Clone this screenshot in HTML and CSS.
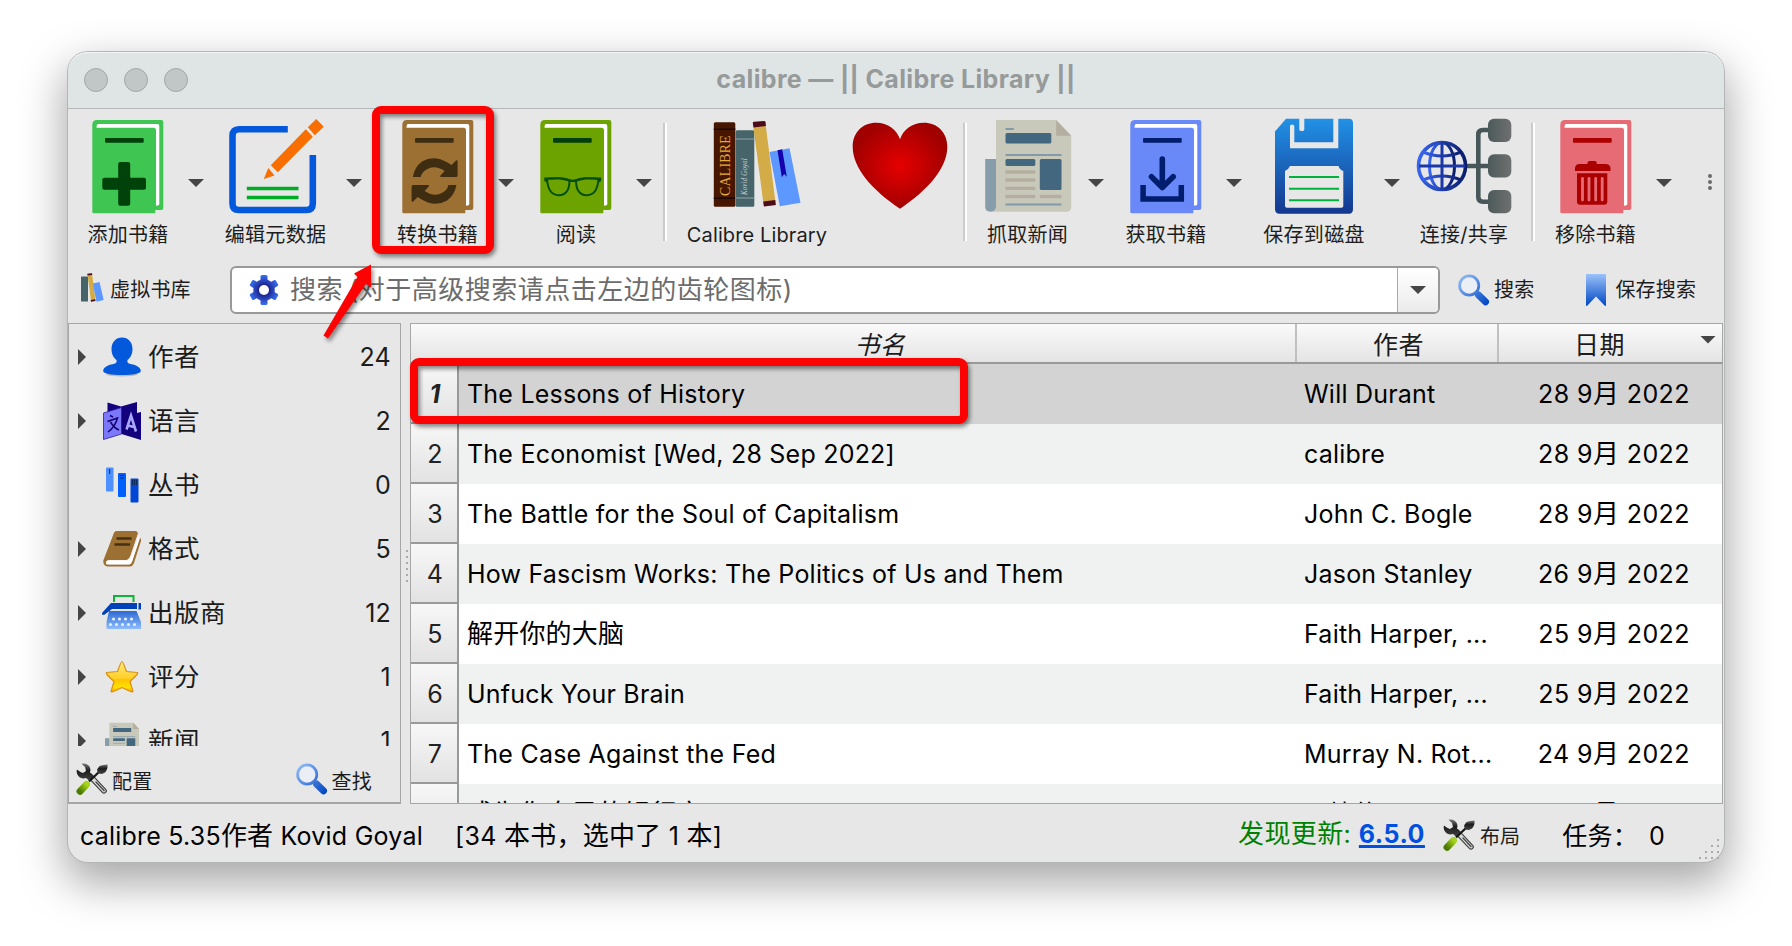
FILE: index.html
```html
<!DOCTYPE html>
<html lang="zh-CN">
<head>
<meta charset="utf-8">
<title>calibre — || Calibre Library ||</title>
<link rel="stylesheet" href="styles.css">
</head>
<body>
<svg class="defs" width="0" height="0" aria-hidden="true">
  <defs>
    <linearGradient id="gFloppy" x1="0" y1="0" x2="0" y2="1"><stop offset="0" stop-color="#2191e6"/><stop offset="1" stop-color="#14378e"/></linearGradient>
    <radialGradient id="gHeart" cx=".5" cy=".5" r=".52"><stop offset="0" stop-color="#e60000"/><stop offset="1" stop-color="#a00000"/></radialGradient>
    <linearGradient id="gGlobe" x1="0" y1="0" x2="1" y2="0"><stop offset="0" stop-color="#3765f0"/><stop offset="1" stop-color="#0a1c6c"/></linearGradient>
    <linearGradient id="gNode" x1="0" y1="0" x2="1" y2="0"><stop offset="0" stop-color="#4c5a5a"/><stop offset="1" stop-color="#707070"/></linearGradient>
    <linearGradient id="gMark" x1="0" y1="0" x2="0" y2="1"><stop offset="0" stop-color="#9cc2fa"/><stop offset="1" stop-color="#0048c4"/></linearGradient>
    <linearGradient id="gLens" gradientUnits="userSpaceOnUse" x1="2" y1="2" x2="30" y2="30"><stop offset="0" stop-color="#93bdf9"/><stop offset="1" stop-color="#0046c2"/></linearGradient>
    <radialGradient id="gGear" gradientUnits="userSpaceOnUse" cx="0" cy="0" r="15"><stop offset=".3" stop-color="#1c1f8c"/><stop offset="1" stop-color="#3a70f0"/></radialGradient>
    <linearGradient id="gStar" x1="0" y1="0" x2="0" y2="1"><stop offset="0" stop-color="#ffe97a"/><stop offset=".55" stop-color="#ffd02a"/><stop offset=".6" stop-color="#ffc400"/><stop offset=".85" stop-color="#ffe000"/><stop offset="1" stop-color="#f7a400"/></linearGradient>
    <linearGradient id="gType" x1="0" y1="0" x2="0" y2="1"><stop offset="0" stop-color="#2d6ad6"/><stop offset="1" stop-color="#8fbcfb"/></linearGradient>
    <linearGradient id="gHandle" x1="1" y1="0" x2="0" y2="1"><stop offset="0" stop-color="#a5d51c"/><stop offset="1" stop-color="#4d7a00"/></linearGradient>
    <linearGradient id="gSteel" x1="0" y1="0" x2="0" y2="1"><stop offset="0" stop-color="#777"/><stop offset=".4" stop-color="#1c1c1c"/><stop offset="1" stop-color="#444"/></linearGradient>

    <symbol id="book" viewBox="0 0 96 96">
      <path fill="currentColor" d="M17 2H81.3Q83.3 2 83.3 4V90Q83.3 92 81.3 92H75.3V95.3H13.8Q12.3 95.3 12.3 94V7Q12.3 2 17 2Z"/>
      <path fill="#fff" d="M18 6H77.5Q79.3 6 79.3 8V86Q79.3 87.7 76 87.7V12Q76 10 74 9.8H16.5Q16.5 6.3 18 6Z"/>
    </symbol>
    <symbol id="news" viewBox="0 0 96 96">
      <path fill="#879da9" d="M5.2 41H17V88Q17 93.7 10.7 93.7T5.2 88Z"/>
      <path fill="#c8c8bb" d="M16 2H76.2L91.2 17.7V89Q91.2 93.7 86.5 93.7H12Q16 92 16 88Z"/>
      <path fill="#b3ae9f" d="M76.2 2V17.7H91.2Z"/>
      <g fill="#42677f"><rect x="25.5" y="15" width="45.8" height="10.5" rx="1.5"/><rect x="25.5" y="41" width="29.8" height="7" rx="1.5"/><rect x="59.8" y="41" width="21.7" height="31" rx="1.5"/></g>
      <path stroke="#8199a8" stroke-width="1.8" d="M25.5 11h8.3M25.5 37h56M25.5 86.5h56"/>
      <path stroke="#b3ae9f" stroke-width="3.4" d="M25.5 54h29.8M25.5 62h29.8M25.5 70.4h29.8M25.5 78.5h29.8M59.8 78.5h21.7"/>
    </symbol>
    <symbol id="lens" viewBox="0 0 32 32">
      <circle cx="11.2" cy="11.5" r="9.6" fill="#ebeef5" stroke="url(#gLens)" stroke-width="2.7"/>
      <path d="M18 18.5L20.5 21" stroke="#4c86e0" stroke-width="3"/>
      <path d="M20.5 21L27.5 27.8" stroke="url(#gLens)" stroke-width="7" stroke-linecap="round"/>
    </symbol>
    <symbol id="tools" viewBox="0 0 32 32">
      <path d="M14 13L28 27.800" stroke="#3a3a3a" stroke-width="5.600" stroke-linecap="round"/>
      <path d="M15 14L28 27.800" stroke="#d8d8d8" stroke-width="3.400" stroke-linecap="round"/>
      <path d="M20 19L28 27.500" stroke="#444" stroke-width="1.300" stroke-linecap="round"/>
      <path fill="url(#gSteel)" d="M5.500 .8L9 4 10 8 7 10 4.500 9 .8 6.500Q0 12 4 14.500 7 16 10 15L13.500 18 17.500 13 14 9.500Q15.500 5 12 2 9 0 5.500 .8Z"/>
      <path d="M13 18.500L24 8" stroke="#161616" stroke-width="2.200"/>
      <path fill="url(#gSteel)" d="M31.500 1.500Q32 6 29 9.500L26 11 22 10.500 21 6.500 23.500 3Q27 1.500 31.500 1.500Z"/>
      <path d="M10.500 21.500L4 28.300" stroke="url(#gHandle)" stroke-width="7" stroke-linecap="round"/>
    </symbol>
  </defs>
</svg>

<main class="window">
  <header class="titlebar">
    <div class="lights"><i></i><i></i><i></i></div>
    <h1>calibre — || Calibre Library ||</h1>
  </header>

  <nav class="toolbar">
    <div class="tool w120"><svg class="ico green" viewBox="0 0 96 96"><use href="#book"/><g fill="#00420a"><rect x="25" y="20" width="38.7" height="4.8" rx="1"/><rect x="22.3" y="59.8" width="43.7" height="12" rx="2"/><rect x="38.2" y="44" width="12" height="43.7" rx="2"/></g></svg><span>添加书籍</span></div>
    <b class="drop"></b>
    <div class="tool w142"><svg class="ico" viewBox="0 0 96 96"><path fill="none" stroke="#0458dc" stroke-width="6.6" d="M59.8 11.3H11Q4.5 11.3 4.5 17.8V85.5Q4.5 92 11 92H78.3Q84.8 92 84.8 85.5V37"/><path fill="#f86e00" d="M35.8 61L40.3 50 46.5 57.5ZM42.8 47.3L77.8 11.3 84.8 18.7 49.8 54.3ZM79.8 9.3L88.2 1 95.8 8.7 86.8 17.3Z"/><path stroke="#00ac24" stroke-width="3.4" d="M18.8 70.5H70.5M18.8 79.5H70.5"/></svg><span>编辑元数据</span></div>
    <b class="drop"></b>
    <div class="tool w121 g15"><svg class="ico brown" viewBox="0 0 96 96"><use href="#book"/><g fill="#3f2d12"><rect x="25" y="20" width="38.7" height="4.8" rx="1"/><path d="M22.8 59Q24.5 49 32 43.5 44 36.5 57.5 44.5L61.5 47 66 42.5Q67.6 41.7 67.6 43.5V57.5Q67.6 59 66 59H51Q49.3 58.5 50.5 57.5L54.6 53Q45 46.5 36.5 51.5 31.5 54.5 30.8 59Z"/><path transform="rotate(180 44.6 63)" d="M22.8 59Q24.5 49 32 43.5 44 36.5 57.5 44.5L61.5 47 66 42.5Q67.6 41.7 67.6 43.5V57.5Q67.6 59 66 59H51Q49.3 58.5 50.5 57.5L54.6 53Q45 46.5 36.5 51.5 31.5 54.5 30.8 59Z"/></g></svg><span>转换书籍</span></div>
    <b class="drop"></b>
    <div class="tool w120 g2"><svg class="ico olive" viewBox="0 0 96 96"><use href="#book"/><rect x="25" y="20" width="38.7" height="4.8" rx="1" fill="#013f0a"/><path fill="none" stroke="#06500f" stroke-width="2" d="M19 61.5Q20 60.3 30 60.3 40.5 60.5 41.5 63.5 41 77 31 77.2 20.500 77.500 19 61.500ZM70.500 61.500Q69.500 60.300 59.500 60.300 49 60.500 48 63.500 48.500 77 58.500 77.200 69 77.500 70.500 61.500Z"/><path fill="#06500f" d="M16.300 59.500Q23 58.800 33 59.500L41.500 61Q45 62.500 48 61L56.500 59.500Q66 58.800 73.200 59.500V63L71 64.500 69 61.500 58 61.300 48.500 63.500Q45 64.500 41.500 63.500L31 61.300 20.500 61.500 19 64.500 16.300 63Z"/></svg><span>阅读</span></div>
    <b class="drop"></b>
    <i class="rule g11"></i>
    <div class="tool w140 g20"><svg class="ico" viewBox="0 0 96 96"><rect x="4.800" y="4.300" width="21.500" height="84.400" rx="1.500" fill="#461600"/><path stroke="#1c0800" stroke-width="1.600" d="M4.800 11.300H26.300M4.800 80.300H26.300"/><rect x="26.500" y="12.300" width="18.800" height="76.400" rx="1.500" fill="#466469"/><path stroke="#8fa5a8" d="M26.500 21H45.300M26.500 80H45.300"/><text class="spine-a" transform="translate(20.500 78) rotate(-90)" textLength="61" lengthAdjust="spacingAndGlyphs">CALIBRE</text><text class="spine-b" transform="translate(37.500 77) rotate(-90)" textLength="37" lengthAdjust="spacingAndGlyphs">Kovid Goyal</text><path fill="#d3ac47" d="M43.800 4.700L56.200 3 66.800 87 54.800 88.300Z"/><path fill="#4c0c1c" d="M43.800 4.700Q44 4 45 3.800L55.500 3 56.500 4 56.900 8 44.500 9.500ZM54.200 83.500L66.200 82 66.800 87 55 88.500Z"/><path fill="#5c98ff" d="M60.500 34L80.500 30.300 91.500 84.700 70.800 88.300Z"/><path fill="#1400ac" d="M68.500 32.300L73.200 31.300 77.800 58.700 75.200 56 72.800 59.300Z"/></svg><span class="lat">Calibre Library</span></div>
    <div class="tool w96 g25"><svg class="ico" viewBox="0 0 96 96"><path fill="url(#gHeart)" d="M48 90.700C20 72 .7 50 .7 28.700 .7 14 11 4.700 24 4.700 36 4.700 45 12 48 21.300 51 12 60 4.700 72 4.700 85 4.700 95.300 14 95.300 28.700 95.300 50 76 72 48 90.700Z"/></svg></div>
    <i class="rule g15"></i>
    <div class="tool w121"><svg class="ico"><use href="#news"/></svg><span>抓取新闻</span></div>
    <b class="drop"></b>
    <div class="tool w120 g2"><svg class="ico blue" viewBox="0 0 96 96"><use href="#book"/><rect x="25" y="20" width="38.700" height="4.800" rx="1" fill="#001d6e"/><path fill="none" stroke="#001d6e" stroke-width="5.500" d="M25.100 67V81H63.300V67"/><path fill="none" stroke="#001d6e" stroke-width="5.600" stroke-linecap="round" stroke-linejoin="round" d="M44.300 41V69M33.500 58.700L44.300 69.500 55.200 58.700"/></svg><span>获取书籍</span></div>
    <b class="drop"></b>
    <div class="tool w140 g2"><svg class="ico" viewBox="0 0 96 96"><path fill="url(#gFloppy)" d="M20 .7H83Q87 .7 87 5V91Q87 95.700 83 95.700H13.500Q9 95.700 9 91V13.500Z"/><path fill="#e7e7e7" d="M24 8Q24 6.500 26 6.500T28.300 8V24.300H67.300V0H72.300V30.300H24ZM33.300 0H38.300V11.500Q38.300 13 35.800 13T33.300 11.500ZM24 48H72.500Q73.500 51.500 77.300 53V88Q77.300 89.700 75.500 89.700H21Q19 89.700 19 88V53Q22.500 51.500 24 48Z"/><path stroke="#00b33c" stroke-width="1.900" d="M23 59H73M23 70.700H73M23 82.300H73"/></svg><span>保存到磁盘</span></div>
    <b class="drop"></b>
    <div class="tool w120 g4"><svg class="ico" viewBox="0 0 96 96"><path fill="none" stroke="#475658" stroke-width="4.600" d="M50 48H73M74 12H67Q62.300 12 62.300 16.500V79Q62.300 83.700 67 83.700H74"/><g fill="none" stroke="url(#gGlobe)" stroke-width="3"><circle cx="26" cy="48" r="23.500" stroke-width="3.600"/><ellipse cx="26" cy="48" rx="12.500" ry="23.500"/><path d="M7 34Q26 42 45 34M7 62Q26 54 45 62"/></g><path stroke="#1c38a8" stroke-width="3" d="M26 24V72M3 48H49"/><g fill="url(#gNode)"><rect x="72" y=".7" width="23.300" height="23.300" rx="6"/><rect x="72" y="36.300" width="23.300" height="23.300" rx="6"/><rect x="72" y="72" width="23.300" height="23.300" rx="6"/></g></svg><span>连接/共享</span></div>
    <i class="rule g7"></i>
    <div class="tool w121"><svg class="ico rose" viewBox="0 0 96 96"><use href="#book"/><g fill="#aa0000"><rect x="25" y="20" width="38.700" height="4.800" rx="1"/><path d="M27 53V50Q27.500 46 31.500 46H39.500V44.500Q40 43 41.500 43H47Q48.700 43 48.700 44.500V46H57.500Q62 46 62.500 50V53ZM29 55.300H59.300V83.500Q59.300 86.700 56 86.700H32Q29 86.700 29 83.500Z"/></g><path stroke="#e66b74" stroke-width="2.800" stroke-linecap="round" d="M34.500 60.500V82M41 60.500V82M47.700 60.500V82M54.200 60.500V82"/></svg><span>移除书籍</span></div>
    <b class="drop"></b>
    <div class="more"><i></i><i></i><i></i></div>
  </nav>

  <section class="searchrow">
    <div class="btn vl"><svg width="24" height="30" viewBox="0 0 24 30"><rect x="0" y="3.500" width="7" height="25" rx=".6" fill="#466469"/><path fill="#d3ac47" d="M6.500 1L11 .3 14.500 27.500 10 28.500Z"/><path fill="#4c0c1c" d="M6.300 .8L11 .2 11.200 2 6.500 2.600ZM9.700 27L14.200 26.300 14.500 28 10 28.700Z"/><path fill="#5c98ff" d="M11.800 10.500L18.500 9 22.700 27 15.500 28.700Z"/></svg><span>虚拟书库</span></div>
    <div class="search">
      <svg width="30" height="32" viewBox="-15 -16 30 32"><g fill="url(#gGear)"><circle r="10.800"/><rect x="-3.500" y="-15" width="7" height="30" rx="1.600"/><rect x="-3.500" y="-15" width="7" height="30" rx="1.600" transform="rotate(60)"/><rect x="-3.500" y="-15" width="7" height="30" rx="1.600" transform="rotate(120)"/></g><circle r="5" fill="#fff"/></svg>
      <span class="ph">搜索 (对于高级搜索请点击左边的齿轮图标)</span>
      <div class="combo"><b class="drop"></b></div>
    </div>
    <div class="btn find"><svg width="32" height="32"><use href="#lens"/></svg><span>搜索</span></div>
    <div class="btn save"><svg width="20" height="32" viewBox="0 0 20 32"><path fill="url(#gMark)" d="M0 1Q0 0 1 0H19Q20 0 20 1V32L18.500 31.500 10 22.500 1.500 31.500 0 32Z"/></svg><span>保存搜索</span></div>
  </section>

  <section class="body">
    <aside class="side">
      <ul class="tree">
        <li><b class="tw"></b><svg viewBox="0 0 38 40"><ellipse cx="19" cy="37" rx="16" ry="2.500" fill="#bbb"/><path fill="#0458dc" d="M19 .5C25 .5 29.500 5 29.500 12 29.500 18 27 21 24.500 23 24 26 25 26.500 30 27.500 35 29 37.800 31 37.800 34 37.800 36.500 30 38 19 38S.2 36.500 .2 34C.2 31 3 29 8 27.500 13 26.500 14 26 13.500 23 11 21 8.500 18 8.500 12 8.500 5 13 .5 19 .5Z"/></svg><span>作者</span><em>24</em></li>
        <li><b class="tw"></b><svg viewBox="0 0 38 40"><path fill="#12007c" d="M4.500 1.500L18 5.500 34 1V12L38 11V39L18.500 33 4.500 20Z"/><path fill="#7b78fa" stroke="#2a1c9c" stroke-width=".8" d="M.5 12L18.500 6.500V33L.5 38.500Z"/><path fill="none" stroke="#15006e" stroke-width="1.500" d="M7 14.500L10 16M4.500 20.500L14.500 17Q12 26 5 31M7.500 21Q11 27 16 29"/><path fill="none" stroke="#aaa7ff" stroke-width="2.600" d="M23.500 28.500L28 14.500 33 30.500M25 24.500L31 26"/></svg><span>语言</span><em>2</em></li>
        <li><b class="tw none"></b><svg viewBox="0 0 38 40"><rect x="3" y="2.500" width="7.500" height="24" rx="1" fill="#4d90ff"/><rect x="15" y="8" width="8" height="24" rx="1" fill="#0060ff"/><rect x="27.500" y="13.500" width="8" height="24" rx="1" fill="#0047d6"/><path stroke="#0a2a5c" d="M6.700 4V9M17 10.500h4M17 13h4M29.500 15V20M31.500 15V20M33.500 15V20"/></svg><span>丛书</span><em>0</em></li>
        <li><b class="tw"></b><svg viewBox="0 0 38 40"><path fill="#9c7033" d="M11 4Q12 2 14 2H32Q35 2.500 34.500 5L27 27Q25.500 31 22 31H5Q2.500 32.500 2.800 34.500 3.500 35.800 5 35.800H26Q28 35.800 29 33L37 9Q38.500 9.500 38 12L31 34Q29.500 37.500 27 37.500H4Q0 36.500 .3 31.500Z"/><path fill="#fff" d="M5 31.500H24L28 28 35.500 7.500 36.500 9.500 29 32.500Q28 35 26 35H5Q2.500 34 3 32.500Z"/><path fill="#9c7033" d="M2 31L11 4Q12 2 14 2H32Q35 2.500 34.500 5L27 27Q25.500 31 22 31Z"/><path stroke="#463012" stroke-width="2.400" d="M13.500 9.500H28.500M11.500 15.500H27"/></svg><span>格式</span><em>5</em></li>
        <li><b class="tw"></b><svg viewBox="0 0 38 40"><path fill="none" stroke="#0eb33a" stroke-width="2" d="M11 9V3H30.500V9"/><path fill="#0242b8" d="M8 10H34V16H9L1 22-1 21.500V20ZM35.500 10H38V16.500H35.500Z"/><path fill="url(#gType)" d="M6 18H33.500L38 29V36H3.500V29Z"/><g stroke="#e9f1ff" stroke-width="3" stroke-linecap="round" stroke-dasharray="0 6"><path d="M10.500 26H34"/><path d="M7.500 31.500H35"/></g></svg><span>出版商</span><em>12</em></li>
        <li><b class="tw"></b><svg viewBox="0 0 38 40"><path fill="url(#gStar)" stroke="#d88f18" stroke-width="1.200" stroke-linejoin="round" d="M19 4.500Q20 4.500 23.500 14.500L34.500 15.500Q36 16.500 27 24.500L30 34.500Q29.500 36 19 30.500 8.500 36 8 34.500L11 24.500Q2 16.500 3.500 15.500L14.500 14.500Q18 4.500 19 4.500Z"/></svg><span>评分</span><em>1</em></li>
        <li><b class="tw"></b><svg><use href="#news"/></svg><span>新闻</span><em>1</em></li>
      </ul>
      <div class="sidebar-foot">
        <div class="btn"><svg width="32" height="32"><use href="#tools"/></svg><span>配置</span></div>
        <div class="btn"><svg width="32" height="32"><use href="#lens"/></svg><span>查找</span></div>
      </div>
    </aside>
    <div class="split"></div>
    <div class="books">
      <div class="head"><div><i>书名</i></div><div>作者</div><div><span>日期</span><b class="drop"></b></div></div>
      <div class="row sel"><b>1</b><span>The Lessons of History</span><span>Will Durant</span><span>28 9<i>月</i> 2022</span></div>
      <div class="row"><b>2</b><span>The Economist [Wed, 28 Sep 2022]</span><span>calibre</span><span>28 9<i>月</i> 2022</span></div>
      <div class="row"><b>3</b><span>The Battle for the Soul of Capitalism</span><span>John C. Bogle</span><span>28 9<i>月</i> 2022</span></div>
      <div class="row"><b>4</b><span>How Fascism Works: The Politics of Us and Them</span><span>Jason Stanley</span><span>26 9<i>月</i> 2022</span></div>
      <div class="row"><b>5</b><span><i>解开你的大脑</i></span><span>Faith Harper, ...</span><span>25 9<i>月</i> 2022</span></div>
      <div class="row"><b>6</b><span>Unfuck Your Brain</span><span>Faith Harper, ...</span><span>25 9<i>月</i> 2022</span></div>
      <div class="row"><b>7</b><span>The Case Against the Fed</span><span>Murray N. Rot...</span><span>24 9<i>月</i> 2022</span></div>
      <div class="row"><b>8</b><span><i>成为你自己的银行家</i></span><span>R·纳什</span><span>24 9<i>月</i> 2022</span></div>
    </div>
  </section>

  <footer class="status">
    <span>calibre 5.35<i>作者</i> Kovid Goyal</span>
    <span class="cnt">[34 <i>本书，选中了</i> 1 <i>本</i>]</span>
    <span class="upd"><i>发现更新</i>: <a>6.5.0</a></span>
    <div class="btn"><svg width="32" height="32"><use href="#tools"/></svg><span>布局</span></div>
    <span class="jobs">任务：</span><span class="zero">0</span>
    <svg class="grip" width="24" height="24" viewBox="0 0 24 24"><path stroke="#aaa" stroke-width="2" stroke-dasharray="2 4" d="M19 2h2M13 8h8M7 14h14M1 20h20"/></svg>
  </footer>

  <div class="mark mark-tool"></div>
  <div class="mark mark-row"></div>
  <svg class="arrow" width="60" height="86" viewBox="0 0 60 86"><path fill="#fd0202" d="M53 6.500L36 15.500 39.500 19 5.500 77.500 10 80.500 48 26 53 29.500Z"/></svg>
</main>
</body>
</html>
```

FILE: styles.css
```css
* { box-sizing: border-box; }
body {
  margin: 0;
  height: 946px;
  overflow: hidden;
  background: #fff;
  padding: 52px 68px 0;
  font: 25px/32px Inter, "Noto Sans CJK SC", sans-serif;
  letter-spacing: .22px;
  color: #000;
}
.defs { position: absolute; }
i, em { font-style: normal; }
svg { display: block; flex: none; overflow: visible; }

.window {
  position: relative;
  width: 1656px;
  height: 810px;
  border-radius: 20px;
  background: #e7e7e7;
  box-shadow: 0 0 0 1px #b4b6b6, 0 18px 44px 4px rgba(0, 0, 0, .34);
  display: flex;
  flex-direction: column;
}

/* title bar */
.titlebar {
  height: 57px;
  flex: none;
  border-radius: 20px 20px 0 0;
  border-bottom: 1px solid #b4b8b8;
  background: #dfe5e5;
  box-shadow: inset 0 2px 0 -1px #f4f6f6;
  display: grid;
  grid-template-columns: 200px 1fr 200px;
  align-items: center;
}
.lights { display: flex; gap: 16px; padding-left: 16px; }
.lights i { width: 24px; height: 24px; border-radius: 50%; background: #c1c6c6; border: 1px solid #a3a7a7; }
.titlebar h1 { margin: 0; padding-bottom: 2px; text-align: center; font-size: 25px; font-weight: 700; letter-spacing: .35px; color: #969a9a; }

/* toolbar */
.toolbar { height: 157px; flex: none; display: flex; align-items: flex-start; padding-top: 9px; color: #1d1d1d; }
.tool { flex: none; display: flex; flex-direction: column; align-items: center; gap: 7px; font-size: 20px; line-height: 28px; letter-spacing: .3px; white-space: nowrap; }
.lat { letter-spacing: .12px; }
.ico { width: 96px; height: 96px; }
.w96 { width: 96px; } .w120 { width: 120px; } .w121 { width: 121px; } .w140 { width: 140px; } .w142 { width: 143px; margin-right: -1px; }
.g2 { margin-left: 2px; } .g4 { margin-left: 4px; } .g7 { margin-left: 7px; } .g11 { margin-left: 11px; }
.g15 { margin-left: 15px; } .g20 { margin-left: 20px; } .g25 { margin-left: 25px; }
.green { color: #3ec552; } .brown { color: #9c7033; } .olive { color: #6da300; } .blue { color: #6889f7; } .rose { color: #e66b74; }
.drop { flex: none; width: 16px; height: 8px; background: #454545; clip-path: polygon(0 0, 100% 0, 50% 100%); }
.toolbar .drop { margin-top: 61px; }
.rule { flex: none; width: 4px; height: 118px; margin-top: 5px; background: linear-gradient(90deg, #cbcbcb 50%, #fff 50%); }
.more { margin: 56px 0 0 36px; display: grid; gap: 2px; }
.more i { width: 4px; height: 4px; border-radius: 50%; background: #6a6a6a; }
.spine-a { font: 14px "Liberation Serif", serif; fill: #e8a83a; }
.spine-b { font: italic 8px "Liberation Serif", serif; fill: #c8d4d4; }

/* search row */
.btn { display: flex; align-items: center; font-size: 20px; line-height: 28px; letter-spacing: .2px; color: #1d1d1d; }
.searchrow { height: 57px; flex: none; display: flex; align-items: flex-start; }
.searchrow .btn { height: 48px; }
.vl { width: 162px; padding-left: 13px; gap: 5px; }
.vl svg { margin-top: -5px; }
.search {
  width: 1210px; height: 48px; border: 2px solid #999; border-radius: 6px; background: #fff;
  display: flex; align-items: center; padding-left: 17px; overflow: hidden;
}
.ph { padding-left: 11px; font-size: 26px; letter-spacing: .5px; word-spacing: -2px; color: #6c6c6c; }
.combo { margin-left: auto; width: 41px; height: 100%; border-left: 1px solid #aaa; background: linear-gradient(#fff, #ebebeb); display: flex; align-items: center; justify-content: center; }
.find { padding-left: 18px; gap: 4px; }
.save { padding-left: 52px; gap: 9px; }

/* main area */
.body { height: 481px; flex: none; display: flex; }
.side { width: 333px; border: 1px solid #a6a6a6; border-width: 1px 1px 2px; display: flex; flex-direction: column; }
.tree { height: 422px; overflow: hidden; margin: 0; padding: 1px 9px 0; list-style: none; color: #1c1c1c; }
.tree li { height: 64px; display: flex; align-items: center; }
.tree svg { width: 38px; height: 40px; margin: 0 7px 0 17px; }
.tree span { font-size: 25.500px; letter-spacing: .5px; }
.tree em { margin-left: auto; }
.tw { width: 8px; height: 16px; background: #454545; clip-path: polygon(0 0, 100% 50%, 0 100%); }
.tw.none { background: none; }
.sidebar-foot { display: flex; padding: 17px 28px 0 7px; justify-content: space-between; }
.sidebar-foot .btn { gap: 4px; height: 32px; }
.sidebar-foot span { padding-top: 6px; }
.split { width: 9px; padding: 227px 0 0 5px; }
.split::before { content: ""; display: block; width: 2px; height: 34px; background: repeating-linear-gradient(#aaa 0 2px, transparent 2px 6px); }

.books { width: 1313px; height: 481px; border: 1px solid #a6a6a6; background: #fff; overflow: hidden; }
.head { display: grid; grid-template-columns: 886px 202px 1fr; height: 40px; border-bottom: 2px solid #999; background: linear-gradient(#fafafa, #e4e4e4); color: #1c1c1c; }
.head div { display: flex; align-items: center; justify-content: center; padding-top: 3px; border-right: 2px solid #c0c0c0; letter-spacing: .5px; }
.head div:nth-child(2) { padding-left: 3px; }
.head div:first-child { padding-left: 54px; }
.head div:first-child i { font-style: italic; }
.head div:last-child { border: 0; padding-left: 75px; padding-right: 6px; justify-content: space-between; }
.head .drop { margin-top: -10px; }
.row { display: grid; grid-template-columns: 48px 837px 202px 1fr; height: 60px; line-height: 60px; white-space: nowrap; }
.row:nth-child(odd) { background: #f0f2f1; }
.row:nth-child(even) { background: #fff; }
.row.sel { background: #d3d3d3; }
.row b { font-weight: 400; text-align: center; padding: 1px 0 0 2px; color: #222; border: 2px solid #999; border-width: 0 2px 2px 0; background: linear-gradient(#f7f7f7, #e2e2e2); line-height: 59px; height: 60px; }
.row.sel b { font-weight: 700; font-style: italic; }
.row span { padding-left: 8px; height: 60px; }
.row i, .status i { font-size: 26px; letter-spacing: .2px; line-height: 1; }
.row span:last-child { padding: 0 32px 0 0; text-align: right; letter-spacing: .45px; }

/* status bar */
.status { position: relative; height: 58px; display: flex; align-items: center; padding: 6px 0 0 12px; white-space: nowrap; }
.cnt { margin-left: 32px; letter-spacing: .35px; }
.upd { position: absolute; left: 1170px; color: #008000; margin-top: -4px; letter-spacing: .5px; }
.upd i { letter-spacing: .4px; }
.upd a { color: #0050e0; font-weight: 700; text-decoration: underline; text-decoration-thickness: 3px; }
.status .btn { margin-left: auto; gap: 5px; margin-top: -2px; }
.status .btn span { padding-top: 4px; }
.jobs { margin-left: 42px; }
.zero { width: 75px; margin-left: 11px; }
.grip { position: absolute; right: 2px; bottom: 0; }

/* annotations */
.mark { position: absolute; border: 8px solid #fd0202; border-radius: 9px; filter: drop-shadow(2px 3px 2px rgba(0, 0, 0, .45)); }
.mark-tool { left: 304px; top: 54px; width: 122px; height: 148px; }
.mark-row { left: 342px; top: 306px; width: 558px; height: 66px; }
.arrow { position: absolute; left: 250px; top: 206px; filter: drop-shadow(2px 3px 2px rgba(0, 0, 0, .45)); }
```
